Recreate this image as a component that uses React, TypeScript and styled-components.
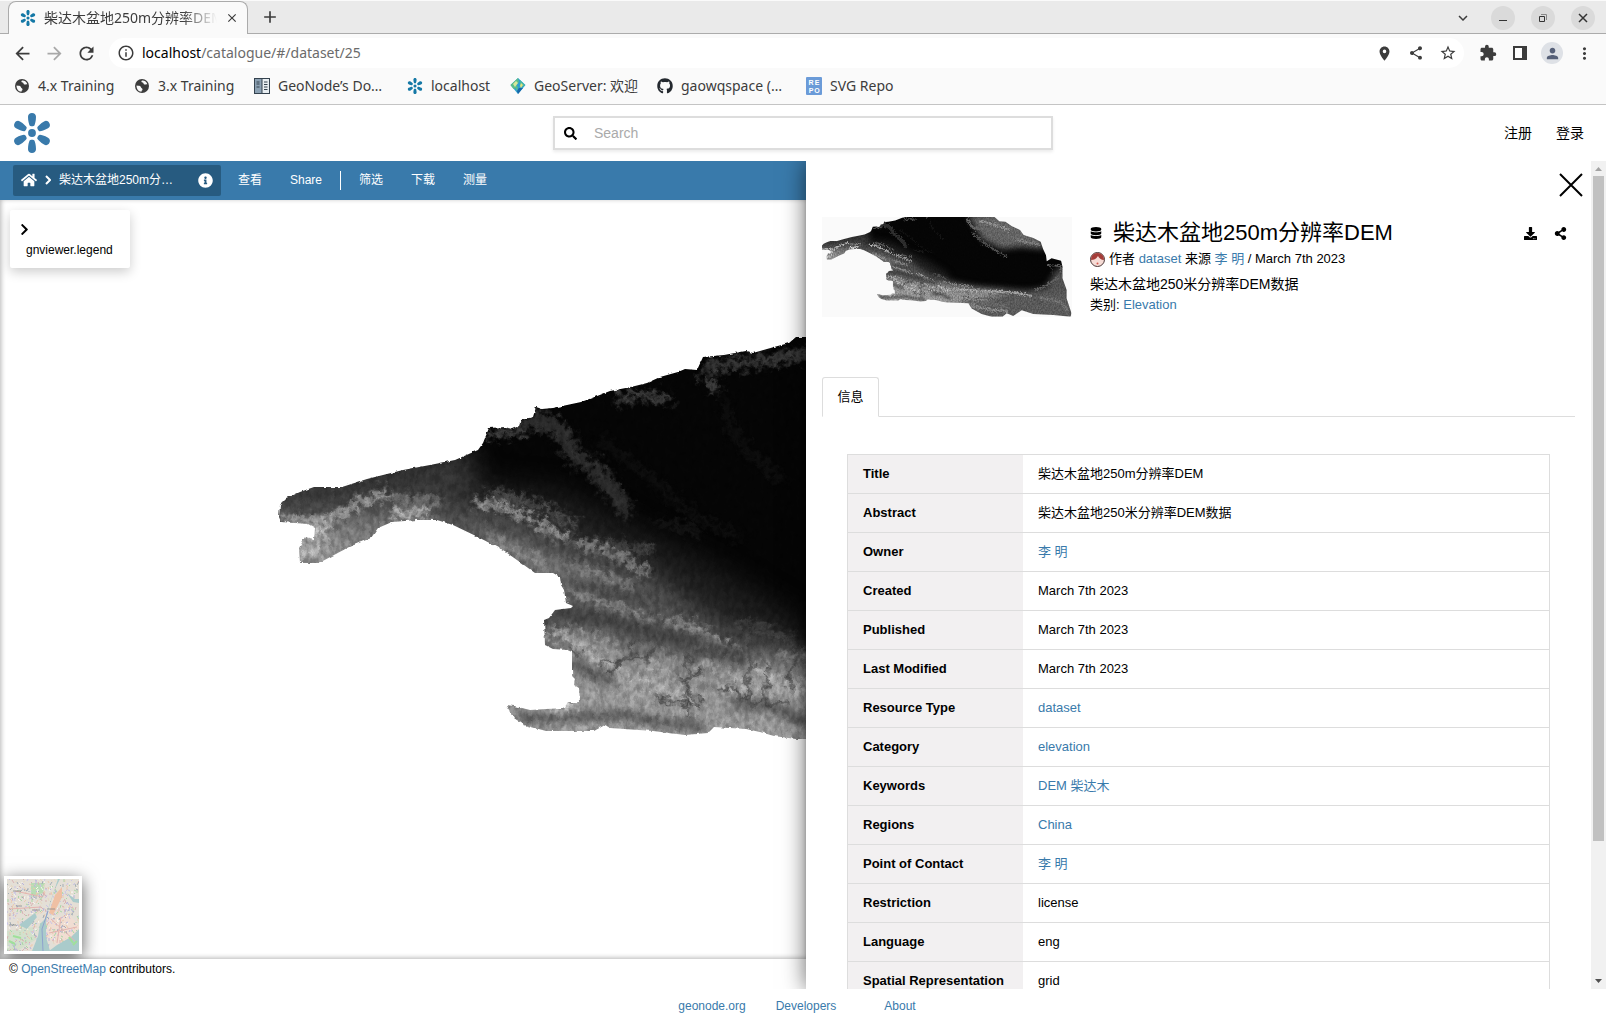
import React from 'react';
import styled, { createGlobalStyle } from 'styled-components';
import {
  MdArrowBack, MdArrowForward, MdRefresh, MdInfoOutline, MdLocationOn, MdShare, MdStarBorder,
  MdExtension, MdMoreVert, MdPerson, MdExpandMore, MdClose, MdAdd,
} from 'react-icons/md';
import {
  FaHome, FaInfoCircle, FaChevronRight, FaSearch, FaDatabase, FaDownload, FaShareAlt, FaGithub,
} from 'react-icons/fa';

const uiFont = '"Noto Sans", "Noto Sans CJK SC", sans-serif';
const pageFont = '"Liberation Sans", "Noto Sans CJK SC", sans-serif';
const blue = '#397aab';

const GlobalStyle = createGlobalStyle`
  *, *::before, *::after { box-sizing: border-box; }
  body { margin: 0; background: #fff; color: #000; font: 12px/18px ${pageFont}; }
  button { border: 0; padding: 0; background: none; color: inherit; font: inherit; cursor: pointer; }
  a { color: ${blue}; text-decoration: none; }
  svg { display: block; flex: none; }
`;

const Screen = styled.div`
  display: flex;
  flex-direction: column;
  height: 100vh;
  overflow: hidden;
`;

/* ---------- browser frame ---------- */

const Chrome = styled.div`
  flex: none;
  background: #fafafa;
  border-bottom: 1px solid #c4c4c4;
  color: #3c3c3c;
  font-family: ${uiFont};
`;

const TabStrip = styled.div`
  display: flex;
  gap: 6px;
  height: 34px;
  padding: 0 11px 0 8px;
  background: #eaeaea;
  border-top: 1px solid #fafafa;
  box-shadow: inset 0 -1px #ababab;
`;

const BrowserTab = styled.div`
  display: flex;
  align-items: center;
  gap: 8px;
  width: 240px;
  padding: 0 8px 0 11px;
  background: #fafafa;
  border: 1px solid #ababab;
  border-bottom: 0;
  border-radius: 8px 8px 0 0;
`;

const TabTitle = styled.span`
  flex: 1;
  overflow: hidden;
  white-space: nowrap;
  font-size: 14px;
  line-height: 20px;
  mask-image: linear-gradient(to right, #000 80%, transparent);
`;

const IconButton = styled.button<{ $size?: number }>`
  display: flex;
  align-items: center;
  justify-content: center;
  flex: none;
  width: ${p => p.$size ?? 32}px;
  height: ${p => p.$size ?? 32}px;
`;

const WindowControls = styled.div`
  display: flex;
  align-items: center;
  gap: 16px;
  margin-left: auto;
`;

const RoundButton = styled(IconButton)`
  border-radius: 50%;
  background: #dadada;
`;

const AddressRow = styled.div`
  display: flex;
  align-items: center;
  height: 38px;
  padding: 0 6px;
`;

const AddressBar = styled.div`
  display: flex;
  align-items: center;
  flex: 1;
  height: 30px;
  margin: 0 8px 0 7px;
  padding-left: 8px;
  border-radius: 15px;
  background: #fff;
`;

const Address = styled.div`
  flex: 1;
  padding-left: 7px;
  font-size: 14px;
  line-height: 20px;
  color: #6b6b6b;
  b { font-weight: 400; color: #000; }
`;

const Avatar = styled.span`
  display: flex;
  align-items: center;
  justify-content: center;
  width: 22px;
  height: 22px;
  border-radius: 50%;
  background: #dee1e6;
  color: #566078;
`;

const Bookmarks = styled.nav`
  display: flex;
  height: 32px;
  padding-left: 14px;
`;

const Bookmark = styled.a<{ $width: number }>`
  display: flex;
  align-items: center;
  gap: 8px;
  width: ${p => p.$width}px;
  height: 28px;
  color: #3c3c3c;
  font-size: 14px;
  white-space: nowrap;
`;

/* ---------- site header ---------- */

const SiteHeader = styled.header`
  display: grid;
  grid-template-columns: 1fr minmax(200px, 500px) 1fr;
  align-items: center;
  flex: none;
  height: 56px;
  padding: 0 12px;
`;

const SearchBox = styled.label`
  display: flex;
  align-items: center;
  height: 34px;
  padding-left: 9px;
  border: 2px solid #ddd;
  box-shadow: 0 2px 3px rgba(0, 0, 0, 0.08);
  input {
    flex: 1;
    height: 28px;
    margin-left: 5px;
    padding: 0 12px;
    border: 0;
    outline: 0;
    background: none;
    font: 14px/20px ${pageFont};
  }
  input::placeholder { color: #aaa; }
`;

const Account = styled.nav`
  display: flex;
  justify-content: flex-end;
  gap: 24px;
  padding-right: 10px;
  font-size: 14px;
  a { color: #000; }
`;

/* ---------- workspace ---------- */

const Workspace = styled.main`
  display: flex;
  flex: 1;
  min-height: 0;
  overflow: hidden;
`;

const MapColumn = styled.section`
  display: flex;
  flex-direction: column;
  flex: 1;
  min-width: 0;
`;

const ActionBar = styled.div`
  display: flex;
  align-items: center;
  flex: none;
  height: 39px;
  padding: 0 0 1px 13px;
  background: ${blue};
  color: #fff;
`;

const Breadcrumb = styled.div`
  display: flex;
  align-items: center;
  width: 208px;
  height: 31px;
  margin-right: 3px;
  padding: 0 8px;
  border-radius: 2px;
  background: #275b80;
  gap: 8px;
  a { color: #fff; }
`;

const Crumb = styled.span`
  flex: 1;
  white-space: nowrap;
`;

const ActionButton = styled.button`
  height: 31px;
  padding: 0 14px;
`;

const Divider = styled.span`
  width: 1px;
  height: 19px;
  margin: 0 4px;
  background: #fff;
`;

const Viewer = styled.div`
  position: relative;
  display: flex;
  flex-direction: column;
  align-items: flex-start;
  justify-content: space-between;
  flex: 1;
  min-height: 0;
  overflow: hidden;
  padding: 10px 0 5px 4px;
`;

const MapCanvas = styled.div`
  position: absolute;
  inset: 0;
  svg { width: 100%; height: 100%; }
  &::after {
    content: '';
    position: absolute;
    inset: 0;
    box-shadow: inset 1px -1px 5px rgba(0, 0, 0, 0.3);
  }
`;

const Legend = styled.div`
  position: relative;
  width: 120px;
  height: 58px;
  margin-left: 6px;
  padding: 13px 8px 0;
  border-radius: 2px;
  background: #fff;
  box-shadow: 0 4px 12px rgba(0, 0, 0, 0.2);
  div { padding: 5px 0 0 8px; }
`;

const BaseMap = styled.button`
  position: relative;
  width: 78px;
  height: 78px;
  border: 3px solid #fff;
  box-shadow: 0 4px 16px rgba(0, 0, 0, 0.65);
`;

const Attribution = styled.div`
  flex: none;
  height: 30px;
  padding: 1px 9px;
`;

/* ---------- detail panel ---------- */

const Panel = styled.aside`
  position: relative;
  display: flex;
  flex: 0 0 50%;
  max-width: 800px;
  background: #fff;
  box-shadow: 0 0 22px rgba(0, 0, 0, 0.6);
`;

const PanelBody = styled.div`
  flex: 1;
  min-width: 0;
  overflow: hidden;
  padding: 0 16px;
`;

const PanelTop = styled.div`
  display: flex;
  justify-content: flex-end;
  height: 56px;
  padding: 8px 0;
  margin-right: -12px;
`;

const Summary = styled.div`
  display: flex;
  gap: 18px;
  height: 160px;
`;

const Thumb = styled.div`
  width: 250px;
  height: 100px;
  background: #fafafa;
`;

const SummaryText = styled.div`
  flex: 1;
  min-width: 0;
  font-size: 13px;
  line-height: 20px;
`;

const TitleRow = styled.div`
  display: flex;
  align-items: center;
  height: 32px;
  h1 {
    flex: 1;
    margin: 0 0 0 11px;
    font-size: 22px;
    line-height: 32px;
    font-weight: 400;
  }
`;

const Byline = styled.div`
  display: flex;
  align-items: center;
  gap: 4px;
`;

const Description = styled.p`
  margin: 4px 0 0;
  font-size: 14px;
  line-height: 22px;
`;

const TabBar = styled.div`
  display: flex;
  height: 40px;
  box-shadow: inset 0 -1px #ddd;
`;

const PanelTab = styled.button`
  width: 57px;
  border: 1px solid #ddd;
  border-bottom-color: #fff;
  border-radius: 3px 3px 0 0;
  background: #fff;
  font-size: 13px;
`;

const MetaTable = styled.table`
  width: calc(100% - 50px);
  margin: 37px 25px 0;
  border-collapse: collapse;
  border: 1px solid #ddd;
  font-size: 13px;
  tr { height: 39px; border-bottom: 1px solid #ddd; }
  th {
    width: 25%;
    padding: 0 15px;
    background: #f2f0f1;
    text-align: left;
    white-space: nowrap;
  }
  td { padding: 0 15px; }
`;

const ScrollRail = styled.div`
  display: flex;
  flex-direction: column;
  align-items: center;
  width: 15px;
  background: #f1f1f1;
`;

const ScrollThumb = styled.div`
  flex: 5;
  width: 11px;
  background: #c1c1c1;
`;

const ScrollRest = styled.div`
  flex: 1;
`;

const Footer = styled.footer`
  display: grid;
  grid-template-columns: repeat(3, 94px);
  justify-content: center;
  align-items: center;
  flex: none;
  height: 34px;
  padding-left: 6px;
  text-align: center;
`;

/* ---------- drawings ---------- */

const Logo = ({ size, color }: { size: number; color: string }) => (
  <svg width={size} height={size} viewBox="0 0 40 40" fill={color}>
    <circle cx="20" cy="20" r="3.9" />
    {[0, 60, 120, 180, 240, 300].map(a => (
      <path
        key={a}
        transform={`rotate(${a} 20 20)`}
        d="M16 3.8C16 1.4 17.7 0 20 0s4 1.400 4 3.800C24 8 23 11 22.500 12.200C22 13.500 18 13.500 17.500 12.200C17 11 16 8 16 3.800Z"
      />
    ))}
  </svg>
);

const Globe = () => (
  <svg width="16" height="16" viewBox="0 0 16 16">
    <circle cx="8" cy="8" r="7" fill="#3c3c3c" />
    <path d="M2.500 7.500c2 .3 4 0 4.500 1.800.3 1.200 1.600 1 1.500 2.200-.1 1-1.200 1.200-1 2.300C4.500 13.600 2.500 11 2.500 7.500ZM8 2.500c-1.200 1-.6 1.800.6 2 1.200.2.6 1.600 1.700 2 1.100.3 1.800-.6 3-.2C12.800 4 10.600 2.300 8 2.500Z" fill="#fafafa" />
  </svg>
);

const DocsIcon = () => (
  <svg width="16" height="16" viewBox="0 0 16 16">
    <rect width="16" height="16" fill="#34424e" />
    <rect x="1" y="1" width="6.500" height="14" fill="#8ba0b2" />
    <rect x="8.500" y="1" width="6.500" height="14" fill="#e8eef2" />
    <path d="M2.500 4h3M2.500 6h3M2.500 9h3M10 4h3.500M10 6.500h3.500M10 9h3.500M10 11.500h3.500" stroke="#34424e" />
  </svg>
);

const GeoServerIcon = () => (
  <svg width="16" height="16" viewBox="0 0 16 16">
    <path d="M8 0L15.500 7 8 16 .5 7Z" fill="#2f9fd0" />
    <path d="M8 0L.5 7l3 4 2-1 1.500 3 1-4-2-2 3-3Z" fill="#5bbd8a" />
    <path d="M3 6l3-3 2 2-3 4Z" fill="#d7e89a" />
    <path d="M10 2l5 5-2 2-3-2Z" fill="#47b9a4" />
    <path d="M11 5l2 2-2 3-1-2Z" fill="#e4e27a" />
    <path d="M9 10l4 0-5 6-1-3Z" fill="#1767a8" />
  </svg>
);

const RepoIcon = () => (
  <svg width="16" height="18" viewBox="0 0 16 18">
    <rect width="16" height="18" rx="1" fill="#6b9bd8" />
    <g fill="#fff" fontFamily="Liberation Sans" fontWeight="700" fontSize="7" textAnchor="middle">
      <text x="5" y="8">R</text><text x="11" y="8">E</text>
      <text x="5" y="16">P</text><text x="11" y="16">O</text>
    </g>
  </svg>
);

const OUTLINE =
  'M279 517L280 505 287 498 300 492 314 487 342 487 367 479 403 470 430 465 455 460 478 450 483 443 489 428 505 427 512 429 519 426 521 420 533 417 536 407 542 409 553 408 581 402 592 398 610 391 631 387 647 383 660 377 678 372 685 369 697 370 703 357 724 355 746 351 753 353 774 347 789 343 796 337 806 337 860 320 940 350 990 388 1010 405 1035 408 1060 425 1095 441 1110 462 1150 474 1180 490 1190 520 1202 545 1205 570 1225 558 1264 568 1270 592 1270 640 1287 688 1287 723 1307 784 1303 798 1232 791 1150 787 1102 771 1067 795 1040 784 1023 798 978 798 937 787 896 764 882 743 806 739 796 739 774 736 760 732 746 729 714 727 708 733 685 735 653 731 610 728 605 725 594 731 546 731 524 725 514 718 506 705 514 706 530 710 564 708 568 702 580 702 579 688 574 685 575 678 572 675 572 652 567 650 553 649 545 645 544 620 549 618 555 610 571 608 573 606 566 603 564 590 561 585 560 577 553 573 535 573 524 565 503 550 478 537 453 525 437 520 417 520 392 522 378 528 371 538 349 547 319 563 300 563 299 548 305 537 314 539 315 528 308 524 281 522Z';

const RIDGES: Array<[string, string, number]> = [
  ['M283 520L310 522 330 518 350 508 385 492', '#a8a8a8', 6],
  ['M312 532L325 528', '#c4c4c4', 8],
  ['M385 498L410 500 440 502', '#808080', 5],
  ['M395 514L425 511', '#c8c8c8', 6],
  ['M300 550L320 546', '#bcbcbc', 5],
  ['M478 504L500 505 520 514 545 527 565 538', '#a0a0a0', 7],
  ['M490 492L515 498 545 508 575 525', '#5c5c5c', 6],
  ['M575 542L600 550 625 560 648 572', '#8c8c8c', 7],
  ['M600 543L630 548 650 550', '#565656', 5],
  ['M490 540L520 552 545 566', '#8a8a8a', 6],
  ['M565 562L600 574 630 588', '#808080', 6],
  ['M572 592L600 602 635 614 652 622', '#909090', 6],
  ['M668 622L700 630 715 640', '#989898', 6],
  ['M700 642L738 652', '#b8b8b8', 6],
  ['M740 622L770 632 790 640', '#4e4e4e', 5],
  ['M552 635L566 632', '#a8a8a8', 8],
  ['M568 638L590 654 612 664', '#b8b8b8', 5],
  ['M578 634L590 645', '#a0a0a0', 5],
  ['M592 634L602 648', '#9a9a9a', 5],
  ['M606 640L614 652', '#989898', 5],
  ['M615 672L640 684 670 690 690 694', '#b0b0b0', 5],
  ['M645 662L670 674', '#a8a8a8', 5],
  ['M662 650L676 664', '#989898', 5],
  ['M700 666L730 676 760 682', '#a4a4a4', 6],
  ['M755 668L780 684 806 686', '#aaaaaa', 7],
  ['M725 690L770 696 806 692', '#b0b0b0', 5],
  ['M555 713L572 710', '#e4e4e4', 5],
  ['M545 727L590 727', '#a0a0a0', 5],
  ['M620 722L650 726 690 728', '#a0a0a0', 4],
  ['M530 420L552 425 565 436 572 455 595 468 612 490 625 508', '#2c2c2c', 16],
  ['M492 434L525 430', '#4a4a4a', 7],
  ['M620 398L640 394 668 400', '#424242', 8],
  ['M706 378L716 388', '#4a4a4a', 7],
  ['M708 366L750 362 806 354', '#383838', 11],
  ['M725 400L732 430 745 450 765 465 780 480', '#161616', 4],
  ['M655 522L690 528 696 536', '#262626', 3],
  ['M600 440L640 470 700 520 740 538', '#121212', 5],
  ['M880 400L900 430 940 440 1000 470 1050 490', '#606060', 14],
  ['M930 405L990 420 1050 440', '#8a8a8a', 10],
  ['M900 455L940 490 1000 530 1040 550', '#4a4a4a', 8],
  ['M1080 480L1130 495 1170 500', '#7a7a7a', 10],
  ['M780 655L830 665 900 676', '#7a7a7a', 7],
  ['M820 684L900 690 1000 694 1080 700 1140 712', '#9a9a9a', 10],
  ['M860 735L960 742 1040 755', '#646464', 14],
  ['M900 755L980 770 1040 775', '#808080', 12],
  ['M1160 690L1200 672 1250 640', '#5c5c5c', 10],
  ['M1210 585L1262 590 1268 620', '#585858', 8],
  ['M1180 720L1260 735 1290 770', '#6e6e6e', 12],
];

const BROAD_VALLEYS: Array<[string, number]> = [
  ['M560 613L600 618 650 632 690 642 740 655', 16],
  ['M490 522L530 535 580 556 620 566', 7],
  ['M566 582L600 590 640 600', 7],
  ['M520 718L570 718 610 714 660 722 700 727', 8],
  ['M575 664L596 676 612 680', 9],
  ['M735 702L770 706 806 722', 9],
];

const VALLEYS = [
  'M600 664L616 664 630 652 640 640',
  'M610 672L626 660 648 652',
  'M688 716L686 690 690 656',
  'M676 676L688 680 702 668',
  'M688 690L702 700 700 708',
  'M646 660L652 650',
  'M748 698L750 670 748 632',
  'M765 698L768 664',
  'M718 690L732 684 740 700 790 706',
  'M788 686L798 650',
  'M655 698L672 702 700 704',
  'M570 646L580 655',
  'M860 715L900 725 960 720 1040 735',
  'M970 700L974 735',
  'M880 690L884 720',
  'M1060 700L1066 730',
  'M1120 715L1170 730 1200 770',
  'M1220 590L1230 620',
];

const Terrain = ({ id }: { id: string }) => (
  <>
    <defs>
      <clipPath id={`${id}-clip`}><path d={OUTLINE} /></clipPath>
      <filter id={`${id}-soft`} x="-10%" y="-10%" width="120%" height="120%" colorInterpolationFilters="sRGB">
        <feGaussianBlur stdDeviation="13" />
      </filter>
      <filter id={`${id}-broad`} x="-10%" y="-10%" width="120%" height="120%" colorInterpolationFilters="sRGB">
        <feGaussianBlur stdDeviation="4" />
      </filter>
      <filter id={`${id}-ridge`} x="-10%" y="-10%" width="120%" height="120%" colorInterpolationFilters="sRGB">
        <feGaussianBlur stdDeviation="3" result="b" />
        <feTurbulence type="fractalNoise" baseFrequency="0.14" numOctaves="3" seed="4" result="n" />
        <feDisplacementMap in="b" in2="n" scale="24" xChannelSelector="R" yChannelSelector="G" />
      </filter>
      <filter id={`${id}-creek`} x="-10%" y="-10%" width="120%" height="120%" colorInterpolationFilters="sRGB">
        <feGaussianBlur stdDeviation="1" result="b" />
        <feTurbulence type="fractalNoise" baseFrequency="0.1" numOctaves="3" seed="7" result="n" />
        <feDisplacementMap in="b" in2="n" scale="18" xChannelSelector="R" yChannelSelector="G" />
      </filter>
      <filter id={`${id}-grain`} x="0" y="0" width="100%" height="100%" colorInterpolationFilters="sRGB">
        <feTurbulence type="fractalNoise" baseFrequency="0.2 0.12" numOctaves="3" seed="11" result="t" />
        <feColorMatrix in="t" type="matrix" values="2 0 0 0 -0.5  2 0 0 0 -0.5  2 0 0 0 -0.5  0 0 0 0 1" result="g" />
        <feComposite in="SourceGraphic" in2="g" operator="arithmetic" k1="0.32" k2="0.86" k3="0" k4="0" />
      </filter>
      <filter id={`${id}-edge`} x="-2%" y="-2%" width="104%" height="104%" colorInterpolationFilters="sRGB">
        <feTurbulence type="fractalNoise" baseFrequency="0.2" numOctaves="2" seed="2" result="n" />
        <feDisplacementMap in="SourceGraphic" in2="n" scale="3" xChannelSelector="R" yChannelSelector="G" />
      </filter>
    </defs>
    <g filter={`url(#${id}-edge)`}>
      <g clipPath={`url(#${id}-clip)`}>
        <g filter={`url(#${id}-grain)`}>
          <rect x="250" y="300" width="1100" height="520" fill="#050505" />
          <g filter={`url(#${id}-soft)`}>
            <path d="M470 480L560 490 640 530 720 570 800 620 806 680 500 680Z" fill="#1c1c1c" />
            <path d="M250 470L400 460 470 445 480 500 400 510 250 540Z" fill="#343434" />
            <path d="M250 505L340 508 400 505 460 508 520 520 580 548 650 575 690 605 740 635 806 652 900 672 1000 680 1120 690 1200 680 1250 600 1340 600 1340 840 480 840 500 690 540 600 430 525 350 580 260 580Z" fill="#505050" />
            <path d="M250 545L350 520 440 510 440 530 330 580 250 590Z" fill="#7e7e7e" />
            <path d="M440 520L500 528 570 560 620 590 560 600 500 570Z" fill="#6c6c6c" />
            <path d="M530 640L600 640 660 655 720 665 770 658 820 675 900 684 1100 700 1100 745 880 755 480 755 490 690 560 690Z" fill="#8a8a8a" />
            <path d="M560 670L640 690 700 705 806 712 806 760 500 760Z" fill="#939393" />
            <path d="M295 540L340 535 330 570 290 570Z" fill="#a0a0a0" />
            <path d="M880 380L1000 370 1100 420 1190 480 1200 520 1100 510 1020 520 940 480Z" fill="#626262" />
            <path d="M1060 690L1180 700 1320 700 1320 820 900 820 900 750Z" fill="#585858" />
          </g>
          <g filter={`url(#${id}-ridge)`} fill="none" strokeLinecap="round" strokeLinejoin="round">
            {RIDGES.map(([d, c, w]) => <path key={d} d={d} stroke={c} strokeWidth={w} />)}
          </g>
          <g filter={`url(#${id}-broad)`} fill="none" stroke="#404040" strokeOpacity="0.9" strokeLinecap="round">
            {BROAD_VALLEYS.map(([d, w]) => <path key={d} d={d} strokeWidth={w} />)}
          </g>
          <g filter={`url(#${id}-creek)`} fill="none" stroke="#444" strokeOpacity="0.85" strokeLinecap="round">
            {VALLEYS.map(d => <path key={d} d={d} strokeWidth="3" />)}
          </g>
        </g>
      </g>
    </g>
  </>
);

const CityMap = () => {
  const colors = ['#d9b3b3', '#b7b3dc', '#a9d6a6', '#ebc9ae', '#f7f4ee', '#a3adb6', '#c9c4e6', '#e6d9c2'];
  const specks = Array.from({ length: 620 }, (_, i) => {
    const x = (i * 37 + ((i * i) % 23) * 3) % 73;
    const y = (i * 53 + ((i * i) % 19) * 5 + Math.floor(i / 73) * 7) % 73;
    return <path key={i} d={`M${x} ${y}l${(i % 5) - 2} ${(i % 3) + 1}`} stroke={colors[i % 8]} />;
  });
  return (
    <svg width="72" height="72" viewBox="0 0 72 72">
      <rect width="72" height="72" fill="#e4dfd6" />
      <path d="M24 4h14l-2 10-12 4Z" fill="#b8dcb4" />
      <path d="M0 52l26-4 4 12-20 12H0Z" fill="#d3e0cc" />
      <path d="M40 40l22-4 10 10v14l-20 8-12-10Z" fill="#f0ddd2" />
      {specks}
      <path d="M55 8l0 10-9 18-4-2 6-18Z" fill="#efc0a4" />
      <path d="M51 0l-4 12-6 18-3 10-5 5-2 12-6 15h18l-4-14 0-16 3-14 6-18 5-10Z" fill="#aacbcb" />
      <path d="M12 46l16-12 2 4-10 12ZM72 50l-8 8-14 8-8 6h30ZM60 14l8 6 4 0v4l-6-1Z" fill="#aacbcb" />
      <path d="M62 58l4 6M66 66l4-4M2 62l6 3M6 57l8 2" stroke="#9fe09a" strokeWidth="2" />
      <path d="M41 32l-6 18 1 22" fill="none" stroke="#8fa2cc" />
      <path d="M44 40l24 22M50 64l4-26M42 54l28-6M2 30l32-2M8 12l28 6" fill="none" stroke="#e4b4b0" />
      <path d="M6 12h8M25 31h8M40 30h8M9 27h6M2 46h7" stroke="#7b8088" strokeOpacity="0.7" />
    </svg>
  );
};

const AuthorFace = () => (
  <svg width="15" height="15" viewBox="0 0 15 15">
    <circle cx="7.500" cy="7.500" r="7" fill="#f6dcd6" stroke="#4a3535" />
    <path d="M1 8C1 3 4 1 7.500 1S14 3 14 8C11 8 9 6 8 4 6 7 4 8 1 8Z" fill="#a43c38" />
    <circle cx="7.500" cy="11.500" r="1" fill="#d4574f" />
  </svg>
);

/* ---------- data ---------- */

const bookmarks: Array<[React.ReactNode, string, number]> = [
  [<Globe />, '4.x Training', 120],
  [<Globe />, '3.x Training', 120],
  [<DocsIcon />, 'GeoNode’s Do…', 153],
  [<Logo size={16} color="#1478a6" />, 'localhost', 103],
  [<GeoServerIcon />, 'GeoServer: 欢迎', 147],
  [<FaGithub size={16} color="#24292f" />, 'gaowqspace (…', 149],
  [<RepoIcon />, 'SVG Repo', 100],
];

const rows: Array<[string, string, boolean]> = [
  ['Title', '柴达木盆地250m分辨率DEM', false],
  ['Abstract', '柴达木盆地250米分辨率DEM数据', false],
  ['Owner', '李 明', true],
  ['Created', 'March 7th 2023', false],
  ['Published', 'March 7th 2023', false],
  ['Last Modified', 'March 7th 2023', false],
  ['Resource Type', 'dataset', true],
  ['Category', 'elevation', true],
  ['Keywords', 'DEM 柴达木', true],
  ['Regions', 'China', true],
  ['Point of Contact', '李 明', true],
  ['Restriction', 'license', false],
  ['Language', 'eng', false],
  ['Spatial Representation', 'grid', false],
];

const BrowserFrame = () => (
  <Chrome>
    <TabStrip>
      <BrowserTab>
        <Logo size={16} color="#1478a6" />
        <TabTitle>柴达木盆地250m分辨率DEM</TabTitle>
        <IconButton $size={14} aria-label="Close tab"><MdClose size={14} /></IconButton>
      </BrowserTab>
      <IconButton aria-label="New tab"><MdAdd size={20} /></IconButton>
      <WindowControls>
        <IconButton $size={24} aria-label="Search tabs"><MdExpandMore size={18} /></IconButton>
        <RoundButton $size={24} aria-label="Minimise">
          <svg width="10" height="10" stroke="#333"><path d="M1 7.500h8" /></svg>
        </RoundButton>
        <RoundButton $size={24} aria-label="Restore">
          <svg width="10" height="10" fill="none" stroke="#333"><path d="M1.500 3.500h5v5h-5Z" /><path d="M3 1.500h5.500V7" stroke="#888" /></svg>
        </RoundButton>
        <RoundButton $size={24} aria-label="Close window">
          <svg width="10" height="10" stroke="#333" strokeWidth="1.500"><path d="M1 1l8 8M9 1l-8 8" /></svg>
        </RoundButton>
      </WindowControls>
    </TabStrip>
    <AddressRow>
      <IconButton aria-label="Back"><MdArrowBack size={21} /></IconButton>
      <IconButton aria-label="Forward"><MdArrowForward size={21} color="#a8a8a8" /></IconButton>
      <IconButton aria-label="Reload"><MdRefresh size={21} /></IconButton>
      <AddressBar>
        <MdInfoOutline size={18} />
        <Address><b>localhost</b>/catalogue/#/dataset/25</Address>
        <IconButton aria-label="Location"><MdLocationOn size={17} /></IconButton>
        <IconButton aria-label="Share page"><MdShare size={16} /></IconButton>
        <IconButton aria-label="Bookmark"><MdStarBorder size={18} /></IconButton>
      </AddressBar>
      <IconButton aria-label="Extensions"><MdExtension size={18} /></IconButton>
      <IconButton aria-label="Side panel">
        <svg width="14" height="14" viewBox="0 0 14 14"><path d="M1 1h12v12H1Z" fill="#fff" stroke="#3c3c3c" strokeWidth="2" /><path d="M9 0h5v14H9Z" fill="#3c3c3c" /></svg>
      </IconButton>
      <IconButton aria-label="Profile"><Avatar><MdPerson size={17} /></Avatar></IconButton>
      <IconButton aria-label="Menu"><MdMoreVert size={19} /></IconButton>
    </AddressRow>
    <Bookmarks>
      {bookmarks.map(([icon, text, width]) => (
        <Bookmark key={text} href="#" $width={width}>{icon}{text}</Bookmark>
      ))}
    </Bookmarks>
  </Chrome>
);

const DetailPanel = () => (
  <Panel>
    <PanelBody>
      <PanelTop>
        <IconButton aria-label="Close details">
          <svg width="24" height="24" stroke="#000" strokeWidth="2"><path d="M1 1l22 22M23 1L1 23" /></svg>
        </IconButton>
      </PanelTop>
      <Summary>
        <Thumb>
          <svg width="250" height="100" viewBox="280 388 1029 411" preserveAspectRatio="none"><Terrain id="thumb" /></svg>
        </Thumb>
        <SummaryText>
          <TitleRow>
            <FaDatabase size={12} />
            <h1>柴达木盆地250m分辨率DEM</h1>
            <IconButton $size={30} aria-label="Download"><FaDownload size={13} /></IconButton>
            <IconButton $size={30} aria-label="Share"><FaShareAlt size={13} /></IconButton>
          </TitleRow>
          <Byline>
            <AuthorFace />
            <span>作者 <a href="#">dataset</a> 来源 <a href="#">李 明</a> / March 7th 2023</span>
          </Byline>
          <Description>柴达木盆地250米分辨率DEM数据</Description>
          <div>类别: <a href="#">Elevation</a></div>
        </SummaryText>
      </Summary>
      <TabBar role="tablist"><PanelTab role="tab" aria-selected="true">信息</PanelTab></TabBar>
      <MetaTable>
        <tbody>
          {rows.map(([label, value, link]) => (
            <tr key={label}>
              <th scope="row">{label}</th>
              <td>{link ? <a href="#">{value}</a> : value}</td>
            </tr>
          ))}
        </tbody>
      </MetaTable>
    </PanelBody>
    <ScrollRail aria-hidden="true">
      <svg width="15" height="15" fill="#a3a3a3"><path d="M4 10h7L7.500 6Z" /></svg>
      <ScrollThumb />
      <ScrollRest />
      <svg width="15" height="15" fill="#505050"><path d="M4 5h7L7.500 9Z" /></svg>
    </ScrollRail>
  </Panel>
);

export default function App() {
  return (
    <Screen>
      <GlobalStyle />
      <BrowserFrame />
      <SiteHeader>
        <a href="#" aria-label="Home"><Logo size={40} color={blue} /></a>
        <SearchBox>
          <FaSearch size={13} />
          <input type="text" placeholder="Search" aria-label="Search" />
        </SearchBox>
        <Account><a href="#">注册</a><a href="#">登录</a></Account>
      </SiteHeader>
      <Workspace>
        <MapColumn>
          <ActionBar>
            <Breadcrumb>
              <a href="#" aria-label="Home"><FaHome size={16} /></a>
              <svg width="6" height="10" fill="none" stroke="#fff" strokeWidth="2"><path d="M1 1l4 4-4 4" /></svg>
              <Crumb>柴达木盆地250m分…</Crumb>
              <FaInfoCircle size={15} />
            </Breadcrumb>
            <ActionButton>查看</ActionButton>
            <ActionButton>Share</ActionButton>
            <Divider />
            <ActionButton>筛选</ActionButton>
            <ActionButton>下载</ActionButton>
            <ActionButton>测量</ActionButton>
          </ActionBar>
          <Viewer>
            <MapCanvas>
              <svg viewBox="0 200 806 759" preserveAspectRatio="xMidYMid slice"><Terrain id="map" /></svg>
            </MapCanvas>
            <Legend>
              <FaChevronRight size={13} />
              <div>gnviewer.legend</div>
            </Legend>
            <BaseMap aria-label="Base map"><CityMap /></BaseMap>
          </Viewer>
          <Attribution>© <a href="#">OpenStreetMap</a> contributors.</Attribution>
        </MapColumn>
        <DetailPanel />
      </Workspace>
      <Footer>
        <a href="#">geonode.org</a>
        <a href="#">Developers</a>
        <a href="#">About</a>
      </Footer>
    </Screen>
  );
}
